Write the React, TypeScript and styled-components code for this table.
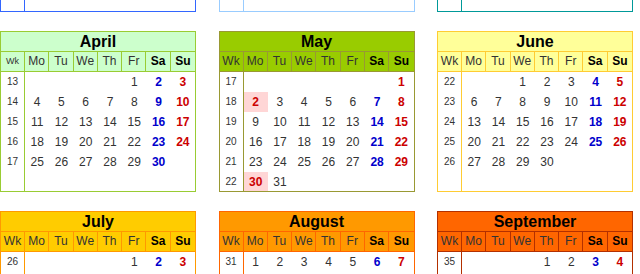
import React from 'react';
import styled, { createGlobalStyle } from 'styled-components';

const YEAR = 2016;

// UK bank holidays for the year shown
const HOLIDAYS = ['1-1', '3-25', '3-28', '5-2', '5-30', '8-29'];

// the first row of months is scrolled almost out of view: only its bottom edge shows
const TAILS = [
  { name: 'January', border: '#3366ff' },
  { name: 'February', border: '#99ccff' },
  { name: 'March', border: '#009999' },
];

// the last row runs past the bottom of the view: only its first week is shown
const MONTHS = [
  { month: 3, name: 'April', border: '#99cc33', fill: '#ccffcc', smallWk: true },
  { month: 4, name: 'May', border: '#999933', fill: '#99cc00' },
  { month: 5, name: 'June', border: '#ffcc33', fill: '#ffff99' },
  { month: 6, name: 'July', border: '#ff9900', fill: '#ffcc00', shownWeeks: 1 },
  { month: 7, name: 'August', border: '#ff6600', fill: '#ff9900', shownWeeks: 1 },
  { month: 8, name: 'September', border: '#b33000', fill: '#ff6600', shownWeeks: 1 },
];

const DAY_NAMES = ['Mo', 'Tu', 'We', 'Th', 'Fr', 'Sa', 'Su'];

type Week = { wk: number; days: (number | null)[] };

const isoWeek = (d: Date) => {
  const t = new Date(Date.UTC(d.getFullYear(), d.getMonth(), d.getDate()));
  const dow = t.getUTCDay() || 7;
  t.setUTCDate(t.getUTCDate() + 4 - dow);
  const yearStart = new Date(Date.UTC(t.getUTCFullYear(), 0, 1));
  return Math.ceil(((t.getTime() - yearStart.getTime()) / 86400000 + 1) / 7);
};

const buildWeeks = (year: number, month: number): Week[] => {
  const first = new Date(year, month, 1);
  const count = new Date(year, month + 1, 0).getDate();
  const offset = (first.getDay() + 6) % 7;
  const weeks: Week[] = [];
  let day = 1 - offset;
  while (day <= count) {
    const days: (number | null)[] = [];
    for (let i = 0; i < 7; i++) {
      days.push(day + i >= 1 && day + i <= count ? day + i : null);
    }
    weeks.push({ wk: isoWeek(new Date(year, month, day)), days });
    day += 7;
  }
  return weeks;
};

const GlobalStyle = createGlobalStyle`
  html, body {
    margin: 0;
    padding: 0;
    background: #fff;
    overflow: hidden;
  }
  body {
    font-family: "Liberation Sans", Arial, sans-serif;
  }
`;

type Kind = 'weekday' | 'sat' | 'sun' | 'holiday';

type MonthInfo = (typeof MONTHS)[number];

const MonthCard: React.FC<{ m: MonthInfo }> = ({ m }) => {
  const all = buildWeeks(YEAR, m.month);
  const weeks = 'shownWeeks' in m && m.shownWeeks ? all.slice(0, m.shownWeeks) : all;

  const kindOf = (day: number, col: number): Kind => {
    if (HOLIDAYS.includes(`${m.month + 1}-${day}`)) return 'holiday';
    if (col === 5) return 'sat';
    if (col === 6) return 'sun';
    return 'weekday';
  };

  return (
    <Card $border={m.border}>
      <Title $border={m.border} $fill={m.fill}>{m.name}</Title>
      <HeaderRow $border={m.border} $fill={m.fill}>
        <HeaderCell $border={m.border} $small={'smallWk' in m && m.smallWk}>Wk</HeaderCell>
        {DAY_NAMES.map((d, i) => (
          <HeaderCell key={d} $border={m.border} $bold={i >= 5}>{d}</HeaderCell>
        ))}
      </HeaderRow>
      <Body>
        <WeekColumn $border={m.border}>
          {weeks.map((w) => (
            <WeekNumber key={w.wk}>{w.wk}</WeekNumber>
          ))}
        </WeekColumn>
        <DayGrid>
          {weeks.map((w) =>
            w.days.map((d, col) => (
              <DayCell key={`${w.wk}-${col}`} $kind={d ? kindOf(d, col) : 'weekday'}>
                {d ?? ''}
              </DayCell>
            ))
          )}
        </DayGrid>
      </Body>
    </Card>
  );
};

export default function App() {
  return (
    <>
      <GlobalStyle />
      <Page>
        {TAILS.map((t) => (
          <CardTail key={t.name} $border={t.border} aria-label={t.name}>
            <WeekColumn $border={t.border} />
          </CardTail>
        ))}
        {MONTHS.map((m) => (
          <MonthCard key={m.name} m={m} />
        ))}
      </Page>
    </>
  );
}

const Page = styled.div`
  width: 633px;
  height: 100vh;
  overflow: hidden;
  display: grid;
  grid-template-columns: repeat(3, 196px);
  grid-auto-rows: max-content;
  justify-content: space-between;
  row-gap: 19px;
`;

const CardTail = styled.div<{ $border: string }>`
  box-sizing: border-box;
  height: 12px;
  display: flex;
  border: 1px solid ${(p) => p.$border};
  border-top: none;
`;

const Card = styled.div<{ $border: string }>`
  box-sizing: border-box;
  width: 196px;
  height: 161px;
  border: 1px solid ${(p) => p.$border};
  background: #fff;
  display: flex;
  flex-direction: column;
  overflow: hidden;
`;

const Title = styled.div<{ $border: string; $fill: string }>`
  box-sizing: border-box;
  height: 20px;
  line-height: 19px;
  border-bottom: 1px solid ${(p) => p.$border};
  background: ${(p) => p.$fill};
  text-align: center;
  font-size: 16px;
  font-weight: bold;
  color: #000;
`;

const HeaderRow = styled.div<{ $border: string; $fill: string }>`
  box-sizing: border-box;
  height: 20px;
  display: grid;
  grid-template-columns: 24px repeat(7, 1fr);
  border-bottom: 1px solid ${(p) => p.$border};
  background: ${(p) => p.$fill};
`;

const HeaderCell = styled.div<{ $border: string; $bold?: boolean; $small?: boolean }>`
  box-sizing: border-box;
  border-right: 1px solid ${(p) => p.$border};
  text-align: center;
  line-height: 19px;
  font-size: ${(p) => (p.$small ? '9px' : '12px')};
  font-weight: ${(p) => (p.$bold ? 'bold' : 'normal')};
  color: ${(p) => (p.$bold ? '#000' : '#333')};
  white-space: nowrap;
  overflow: hidden;

  &:last-child {
    border-right: none;
  }
`;

const Body = styled.div`
  flex: 1;
  display: flex;
  min-height: 0;
`;

const WeekColumn = styled.div<{ $border: string }>`
  box-sizing: border-box;
  width: 24px;
  flex-shrink: 0;
  border-right: 1px solid ${(p) => p.$border};
  display: flex;
  flex-direction: column;
`;

const WeekNumber = styled.div`
  height: 20px;
  line-height: 20px;
  text-align: center;
  font-size: 10px;
  color: #333;
`;

const DAY_COLORS: Record<Kind, string> = {
  weekday: '#333',
  sat: '#0000cc',
  sun: '#cc0000',
  holiday: '#cc0000',
};

const DayGrid = styled.div`
  flex: 1;
  display: grid;
  grid-template-columns: repeat(7, 1fr);
  grid-auto-rows: 20px;
  align-content: start;
`;

const DayCell = styled.div<{ $kind: Kind }>`
  text-align: center;
  line-height: 20px;
  font-size: 12px;
  font-weight: ${(p) => (p.$kind === 'weekday' ? 'normal' : 'bold')};
  color: ${(p) => DAY_COLORS[p.$kind]};
  background: ${(p) => (p.$kind === 'holiday' ? '#ffd6d6' : 'transparent')};
`;
